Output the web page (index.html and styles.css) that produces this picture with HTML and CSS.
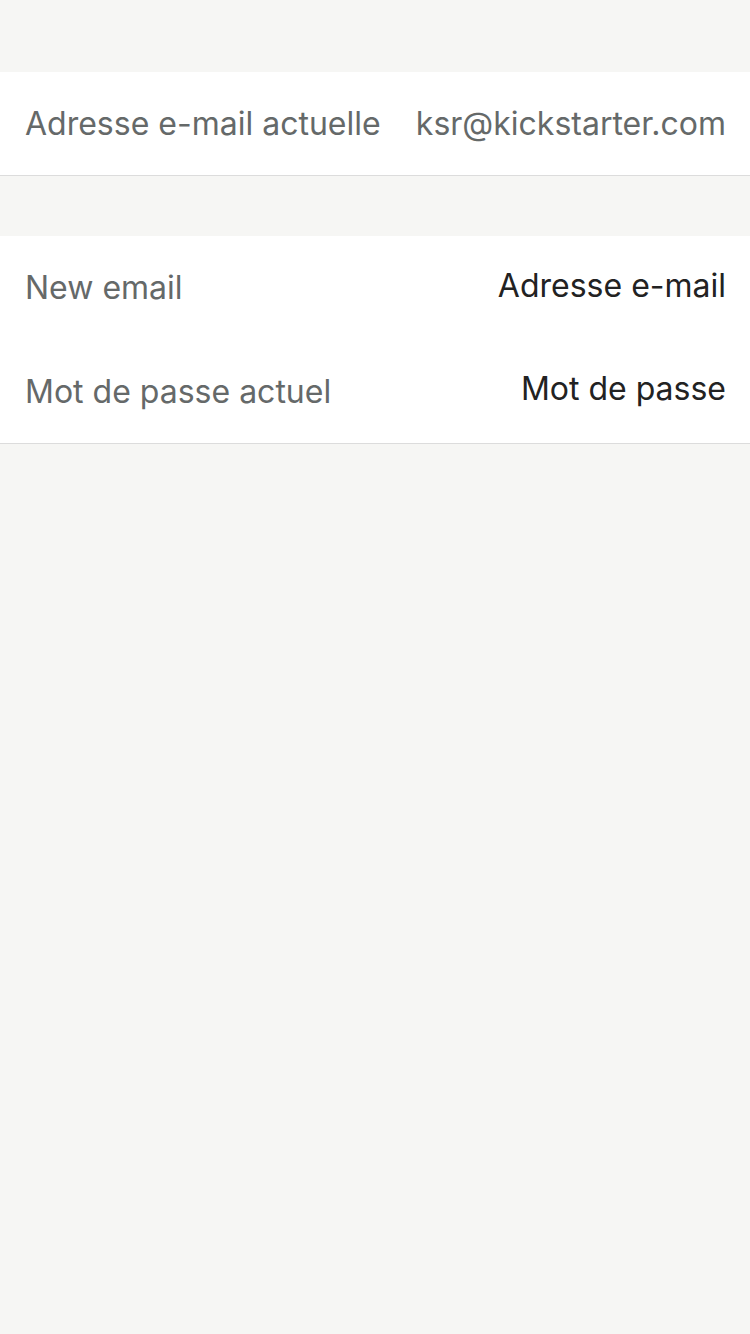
FILE: index.html
```html
<!DOCTYPE html>
<html lang="fr">
<head>
<meta charset="utf-8">
<link rel="stylesheet" href="styles.css">
</head>
<body>
<main class="page">
  <section class="group group-first">
    <div class="row">
      <span class="label">Adresse e-mail actuelle</span>
      <span class="value value-muted">ksr@kickstarter.com</span>
    </div>
  </section>
  <section class="group">
    <div class="row">
      <span class="label">New email</span>
      <span class="value value-input">Adresse e-mail</span>
    </div>
    <div class="row">
      <span class="label">Mot de passe actuel</span>
      <span class="value value-input">Mot de passe</span>
    </div>
  </section>
</main>
</body>
</html>
```
FILE: styles.css
```css
html, body {
  margin: 0;
  padding: 0;
  background: #f6f6f4;
}
body {
  font-family: Inter, "Open Sans", sans-serif;
  min-height: 1334px;
}
.page {
  display: flex;
  flex-direction: column;
  padding-top: 72px;
}
.group {
  background: #ffffff;
  border-bottom: 1px solid #dcdcdc;
  display: flex;
  flex-direction: column;
}
.group + .group {
  margin-top: 60px;
}
.group-first .row {
  height: 103px;
}
.row {
  height: 103.5px;
  display: flex;
  align-items: center;
  justify-content: space-between;
  padding: 0 24px 0 25px;
  font-size: 32px;
  letter-spacing: 0;
}
.label {
  color: #656969;
}
.value {
  color: #222222;
}
.value-input {
  margin-bottom: 5px;
}
.value-muted {
  color: #656969;
}
```
